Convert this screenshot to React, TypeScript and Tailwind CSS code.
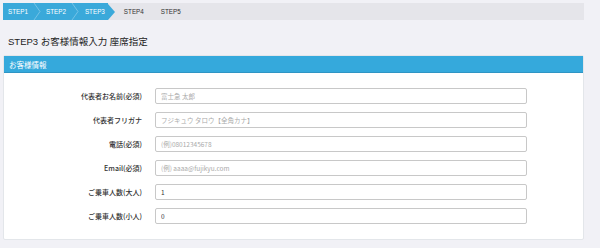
import React from 'react';

const fields = [
  { label: '代表者お名前(必須)', placeholder: '富士急 太郎', value: '' },
  { label: '代表者フリガナ', placeholder: 'フジキュウ タロウ【全角カナ】', value: '' },
  { label: '電話(必須)', placeholder: '(例)08012345678', value: '' },
  { label: 'Email(必須)', placeholder: '(例) aaaa@fujikyu.com', value: '' },
  { label: 'ご乗車人数(大人)', placeholder: '', value: '1' },
  { label: 'ご乗車人数(小人)', placeholder: '', value: '0' },
];

const Chevron = () => (
  <svg width="8" height="17" viewBox="0 0 8 17" className="shrink-0">
    <polyline points="1,0 7,8.5 1,17" fill="none" stroke="#74c2e6" strokeWidth="1" />
  </svg>
);

export default function App() {
  return (
    <div className="w-[600px] h-[248px] bg-[#f1f1f6] overflow-hidden pt-[3px] font-['Liberation_Sans','Noto_Sans_CJK_JP',sans-serif]">
      {/* steps */}
      <div className="ml-[3px] w-[581px] h-[17px] bg-[#e5e5ea] flex items-center text-[6.3px] font-light">
        <div className="flex items-center h-full bg-[#3aa9da] text-white">
          <span className="pl-[5px] pr-[5px]">STEP1</span>
          <Chevron />
          <span className="pl-[5px] pr-[5px]">STEP2</span>
          <Chevron />
          <span className="pl-[6px] pr-[3px]">STEP3</span>
        </div>
        <div className="w-0 h-0 border-y-[8.5px] border-y-transparent border-l-[7px] border-l-[#3aa9da]" />
        <span className="ml-[9px] text-[#333]">STEP4</span>
        <span className="ml-[17px] text-[#333]">STEP5</span>
      </div>

      <h1 className="ml-[8px] mt-[15px] text-[9.5px] leading-[13px] text-[#222]">STEP3 お客様情報入力 座席指定</h1>

      {/* panel */}
      <div className="ml-[3px] mt-[7px] w-[581px] bg-white border border-[#e3e6ea] rounded-[2px]">
        <div className="h-[17px] bg-[#35a9dc] border-b border-[#2f95c4] text-white text-[7.5px] leading-[17px] pl-[5px] font-['Noto_Sans_CJK_JP',sans-serif]">
          お客様情報
        </div>
        <div className="pt-[15px] pb-[15px] flex flex-col gap-[8px]">
          {fields.map((f) => (
            <div key={f.label} className="flex items-center h-[16px]">
              <label className="w-[138px] text-right text-[7px] font-medium text-[#333] font-['Noto_Sans_CJK_JP',sans-serif]">
                {f.label}
              </label>
              <input
                readOnly
                value={f.value}
                placeholder={f.placeholder}
                className="ml-[13px] w-[372px] h-[16px] border border-[#c8c8c8] rounded-[2px] px-[5px] text-[6.5px] text-[#333] placeholder:text-[#aaa] outline-none font-['Noto_Sans_CJK_JP',sans-serif]"
              />
            </div>
          ))}
        </div>
      </div>
    </div>
  );
}
